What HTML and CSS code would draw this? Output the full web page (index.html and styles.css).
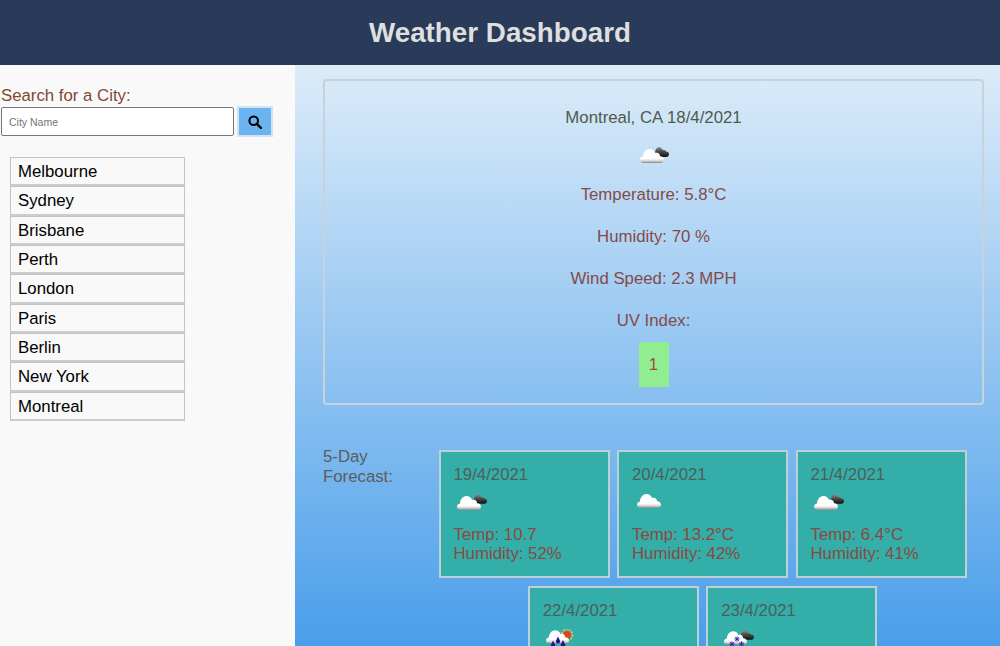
FILE: index.html
```html
<!DOCTYPE html>
<html lang="en">
<head>
<meta charset="utf-8">
<title>Weather Dashboard</title>
<link rel="stylesheet" href="styles.css">
</head>
<body>
<svg class="defs" width="0" height="0" aria-hidden="true">
  <defs>
    <linearGradient id="white" x1="0" y1="0" x2="0" y2="1">
      <stop offset="0" stop-color="#ffffff"/><stop offset="0.68" stop-color="#ffffff"/><stop offset="0.84" stop-color="#d8d8d8"/><stop offset="1" stop-color="#868686"/>
    </linearGradient>
    <linearGradient id="dark" x1="0" y1="0" x2="0" y2="1">
      <stop offset="0" stop-color="#8a8a8a"/><stop offset="0.45" stop-color="#4a4a4a"/><stop offset="1" stop-color="#111111"/>
    </linearGradient>
    <symbol id="cloud-white" viewBox="0 0 24 14">
      <path fill="url(#white)" d="M3.500 14C1.500 14 0 12.600 0 10.800 0 9 1.300 7.800 3 7.500 3.200 3.300 6 0 9.500 0c2.800 0 4.800 1.700 5.700 4 .9-.4 2.200-.4 3.100.2 1.100.7 1.700 1.800 1.700 3 2.300-.1 4 1.400 4 3.600S22.300 14 20 14z"/>
    </symbol>
    <symbol id="cloud-dark" viewBox="0 0 16 10">
      <path fill="url(#dark)" d="M3.500 1.500C4.500 0 6.500-.3 8 .8 9 1.600 9.300 2.500 9.300 3 11 2.500 12.500 3.500 13 4.500 15 4.500 16 5.800 16 7.300 16 9 14.800 10 13 10H5C3.500 10 3 8.500 3 7 1.500 6 2.200 3 3.500 1.500z"/>
    </symbol>
  </defs>
</svg>
<header class="topbar"><h1 class="title">Weather Dashboard</h1></header>
<div class="layout">
  <aside class="sidebar">
    <label class="search-label" for="city">Search for a City:</label>
    <div class="search-row">
      <input class="search-input" id="city" type="text" placeholder="City Name">
      <button class="search-btn" type="button" aria-label="Search">
        <svg width="14" height="14" viewBox="0 0 14 14"><circle cx="5.700" cy="5.700" r="4.300" fill="none" stroke="#000" stroke-width="2"/><path d="M8.800 8.800 L13 13" stroke="#000" stroke-width="2.400" stroke-linecap="round"/></svg>
      </button>
    </div>
    <ul class="cities">
      <li class="city">Melbourne</li>
      <li class="city">Sydney</li>
      <li class="city">Brisbane</li>
      <li class="city">Perth</li>
      <li class="city">London</li>
      <li class="city">Paris</li>
      <li class="city">Berlin</li>
      <li class="city">New York</li>
      <li class="city">Montreal</li>
    </ul>
  </aside>
  <main class="content">
    <section class="current">
      <p class="place">Montreal, CA 18/4/2021</p>
      <svg class="cur-icon" width="32" height="20" viewBox="0 0 32 20">
        <use href="#cloud-dark" x="15" y="1" width="16" height="10"/>
        <use href="#cloud-white" x="2" y="3" width="24" height="14"/>
      </svg>
      <p class="stat">Temperature: 5.8°C</p>
      <p class="stat">Humidity: 70 %</p>
      <p class="stat">Wind Speed: 2.3 MPH</p>
      <p class="stat stat-uv">UV Index:</p>
      <div class="uv">1</div>
    </section>
    <section class="forecast">
      <div class="forecast-label">5-Day Forecast:</div>
      <div class="cards">
        <article class="card">
          <div class="date">19/4/2021</div>
          <svg class="day-icon" width="32" height="20" viewBox="0 0 32 20">
            <use href="#cloud-dark" x="17" y="1" width="15" height="10"/>
            <use href="#cloud-white" x="2" y="3" width="24" height="14"/>
          </svg>
          <div class="line">Temp: 10.7</div>
          <div class="line">Humidity: 52%</div>
        </article>
        <article class="card">
          <div class="date">20/4/2021</div>
          <svg class="day-icon" width="32" height="20" viewBox="0 0 32 20">
            <use href="#cloud-white" x="4" y="1" width="24" height="14"/>
          </svg>
          <div class="line">Temp: 13.2°C</div>
          <div class="line">Humidity: 42%</div>
        </article>
        <article class="card">
          <div class="date">21/4/2021</div>
          <svg class="day-icon" width="32" height="20" viewBox="0 0 32 20">
            <use href="#cloud-dark" x="17" y="1" width="15" height="10"/>
            <use href="#cloud-white" x="2" y="3" width="24" height="14"/>
          </svg>
          <div class="line">Temp: 6.4°C</div>
          <div class="line">Humidity: 41%</div>
        </article>
        <article class="card">
          <div class="date">22/4/2021</div>
          <svg class="day-icon" width="32" height="20" viewBox="0 0 32 20">
            <circle cx="23" cy="6" r="5.500" fill="none" stroke="#f6c445" stroke-width="1.600" stroke-dasharray="1.800 1.200"/>
            <circle cx="23" cy="6" r="3.800" fill="#ee3d1c"/>
            <use href="#cloud-white" x="2" y="1" width="23" height="14"/>
            <path fill="#1c0f96" d="M9 11.500l2.200 4.800a2.300 2.300 0 1 1-4.400 0zM14 7.500l2 4.200a2.100 2.100 0 1 1-4 0zM19 11l2.200 4.800a2.300 2.300 0 1 1-4.400 0z"/>
          </svg>
        </article>
        <article class="card">
          <div class="date">23/4/2021</div>
          <svg class="day-icon" width="32" height="20" viewBox="0 0 32 20">
            <use href="#cloud-dark" x="17" y="1" width="15" height="10"/>
            <use href="#cloud-white" x="2" y="2" width="23" height="14"/>
            <g fill="none" stroke="#3a22b4" stroke-width="1"><path d="M7.500 15h5M10 12.500v5M8.200 13.200l3.600 3.600M11.800 13.200l-3.600 3.600M12.500 10h5M15 7.500v5M13.200 8.200l3.600 3.600M16.800 8.200l-3.600 3.600M17 15h5M19.500 12.500v5M17.700 13.200l3.600 3.600M21.300 13.200l-3.600 3.600"/></g>
          </svg>
        </article>
      </div>
    </section>
  </main>
</div>
</body>
</html>
```

FILE: styles.css
```css
* { box-sizing: border-box; }
html, body { margin: 0; height: 100%; overflow: hidden; }
body { font-family: "Liberation Sans", Arial, sans-serif; background: #f9f9f9; }
.defs { position: absolute; }
.topbar { height: 65px; background: #2a3b5a; display: flex; align-items: center; justify-content: center; }
.title { margin: 0; font-size: 27.800px; font-weight: 700; color: #dfdfdf; }
.layout { display: flex; height: 581px; }
.sidebar { width: 295px; flex: none; padding: 21px 1px 0; background: #f9f9f9; }
.search-label { display: block; font-size: 16.800px; line-height: 20px; color: #80492e; }
.search-row { display: flex; align-items: center; gap: 3px; }
.search-input { width: 233px; height: 29px; padding: 0 7px; border: 1px solid #767676; border-radius: 2px; background: #fff; font: 10.500px "Liberation Sans", Arial, sans-serif; }
.search-input::placeholder { color: #757575; }
.search-btn { width: 36px; height: 31px; padding: 0; display: flex; align-items: center; justify-content: center; background: #6ab4f1; border: 2px solid #d3e3f1; }
.cities { list-style: none; margin: 20px 0 0 9px; padding: 0; }
.city { width: 175px; height: 29.330px; padding-left: 7px; border: 1px solid #c4c4c4; border-bottom: 2px solid #cccccc; font-size: 16.800px; line-height: 28px; color: #000; }
.content { flex: 1; min-width: 0; padding: 14px 16px 0 28px; background: linear-gradient(180deg, #dcecf9 0%, #4a9eea 100%); overflow: hidden; }
.current { height: 326px; border: 2px solid #c8d2da; border-radius: 4px; padding: 27px 0 0; display: flex; flex-direction: column; align-items: center; font-size: 16.800px; line-height: 20px; color: #844a4a; }
.current p { margin: 0; }
.current .place { color: #4f5a4a; }
.cur-icon { margin: 18px 0 19px; }
.current .stat { margin-bottom: 22px; }
.current .stat-uv { margin-bottom: 11px; }
.uv { width: 30px; height: 45px; background: #90ee90; display: flex; align-items: center; justify-content: center; color: #a04848; }
.forecast { display: flex; margin-top: 42px; }
.forecast-label { width: 98px; flex: none; font-size: 16.800px; line-height: 19.500px; color: #5c5c5c; }
.cards { flex: 1; display: flex; flex-wrap: wrap; justify-content: center; gap: 8px 7.500px; margin-top: 3px; }
.card { width: 171px; height: 128px; padding: 13px 13px 0; background: #33aea8; border: 2px solid #bdd0d6; font-size: 16.800px; line-height: 19.500px; color: #8a4a42; }
.date { color: #4f5f58; }
.day-icon { display: block; margin: 8px 0 12px 1px; }
```
